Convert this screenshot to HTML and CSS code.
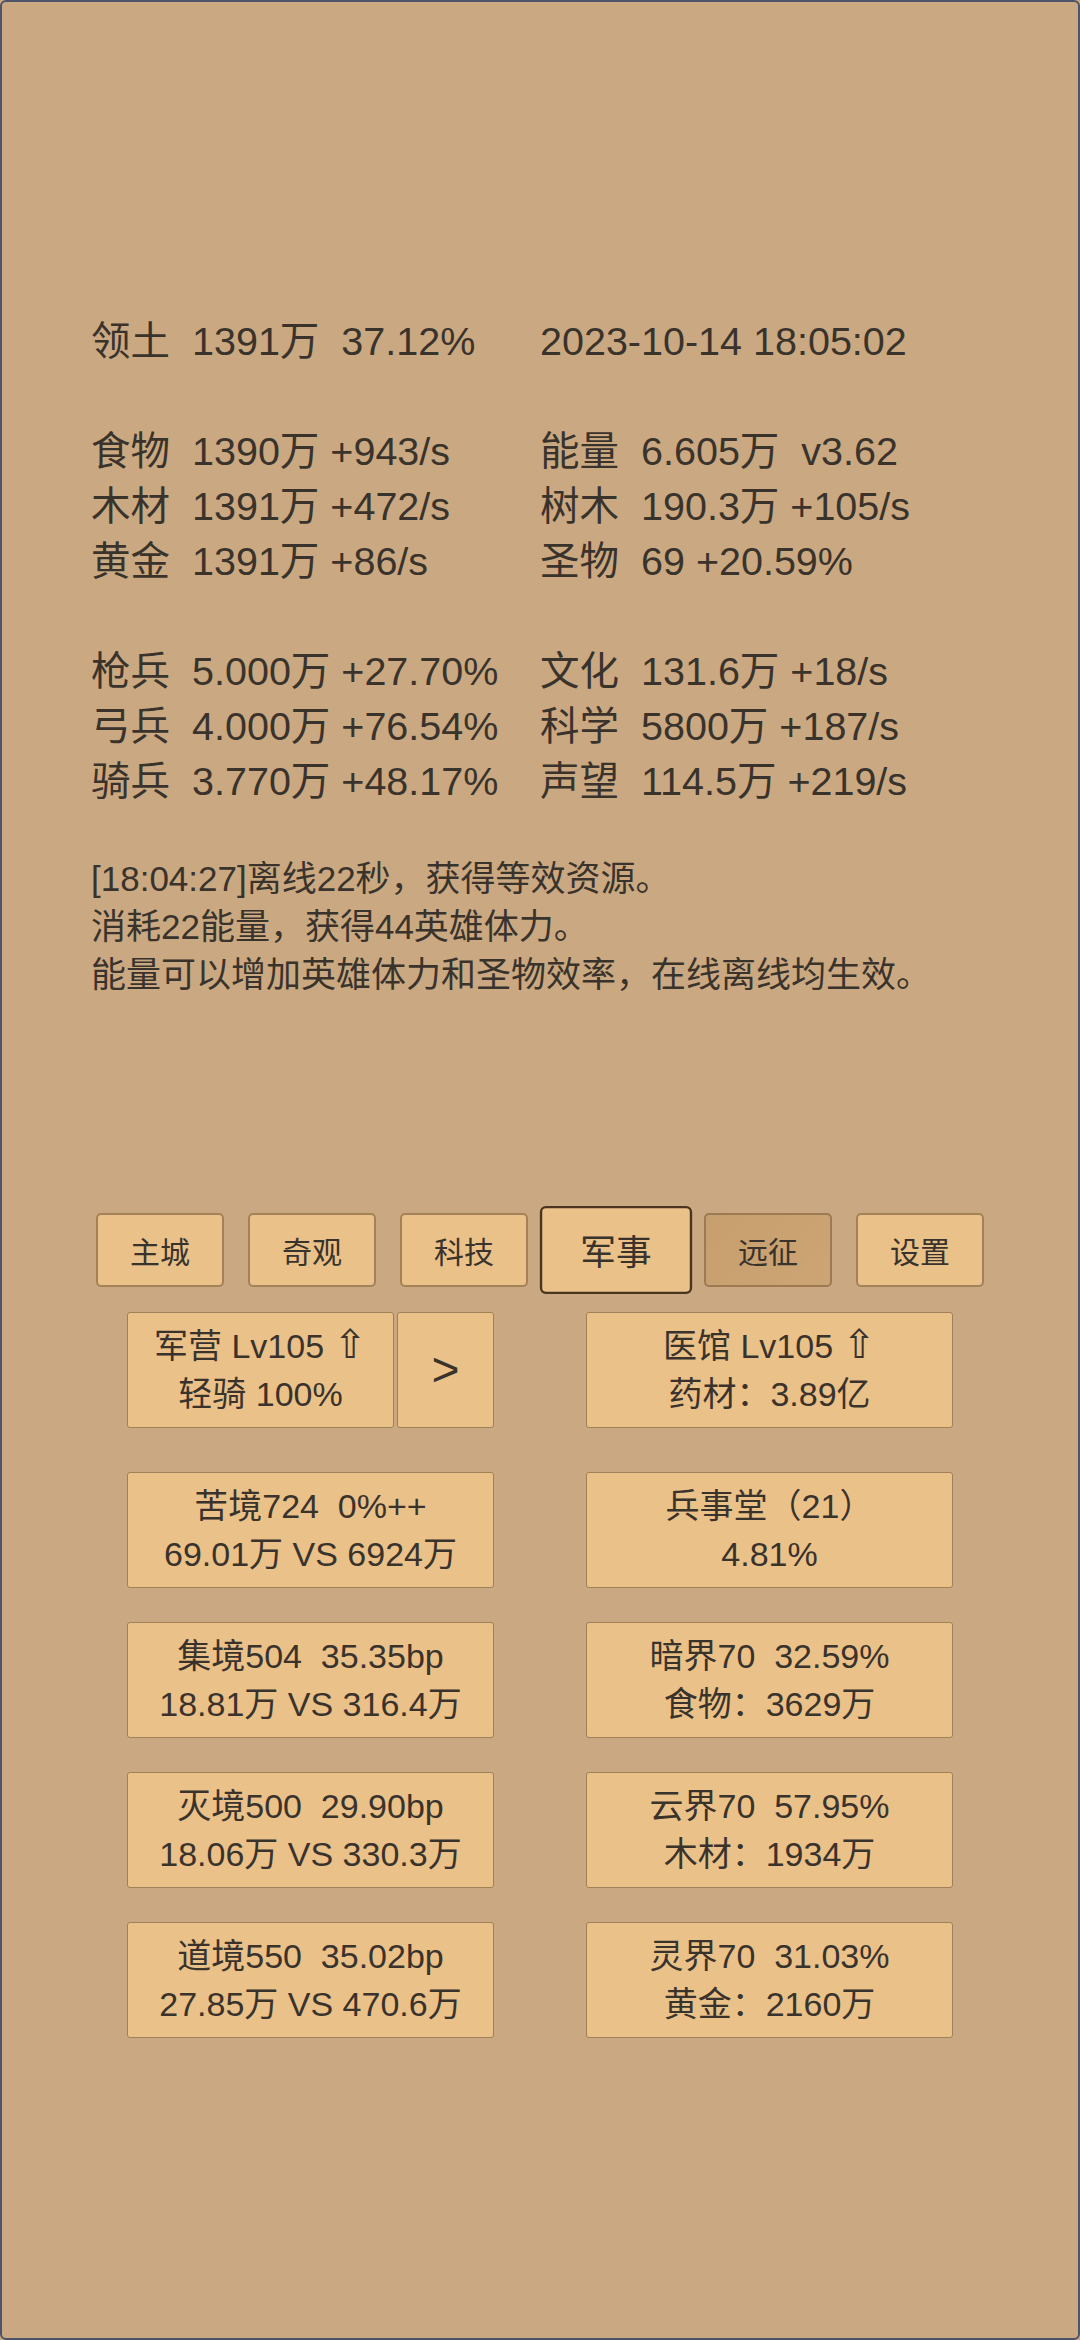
FILE: index.html
```html
<!DOCTYPE html>
<html lang="zh">
<head>
<meta charset="utf-8">
<title>Game</title>
<link rel="stylesheet" href="styles.css">
</head>
<body>
<div class="frame">
  <div class="stats">
    <div class="row"><div class="cell"><span class="lbl">领土</span>1391万  37.12%</div><div class="cell">2023-10-14 18:05:02</div></div>
    <div class="row blank"></div>
    <div class="row"><div class="cell"><span class="lbl">食物</span>1390万 +943/s</div><div class="cell"><span class="lbl">能量</span>6.605万  v3.62</div></div>
    <div class="row"><div class="cell"><span class="lbl">木材</span>1391万 +472/s</div><div class="cell"><span class="lbl">树木</span>190.3万 +105/s</div></div>
    <div class="row"><div class="cell"><span class="lbl">黄金</span>1391万 +86/s</div><div class="cell"><span class="lbl">圣物</span>69 +20.59%</div></div>
    <div class="row blank"></div>
    <div class="row"><div class="cell"><span class="lbl">枪兵</span>5.000万 +27.70%</div><div class="cell"><span class="lbl">文化</span>131.6万 +18/s</div></div>
    <div class="row"><div class="cell"><span class="lbl">弓兵</span>4.000万 +76.54%</div><div class="cell"><span class="lbl">科学</span>5800万 +187/s</div></div>
    <div class="row"><div class="cell"><span class="lbl">骑兵</span>3.770万 +48.17%</div><div class="cell"><span class="lbl">声望</span>114.5万 +219/s</div></div>
  </div>

  <div class="log">
    <div>[18:04:27]离线22秒，获得等效资源。</div>
    <div>消耗22能量，获得44英雄体力。</div>
    <div>能量可以增加英雄体力和圣物效率，在线离线均生效。</div>
  </div>

  <div class="tabs">
    <div class="tab">主城</div>
    <div class="tab">奇观</div>
    <div class="tab">科技</div>
    <div class="tab active">军事</div>
    <div class="tab dim">远征</div>
    <div class="tab">设置</div>
  </div>

  <div class="cards first">
    <div class="pair">
      <div class="card main">
        <div>军营 Lv105 <span class="arrow">⇧</span></div>
        <div>轻骑 100%</div>
      </div>
      <div class="card next">&gt;</div>
    </div>
    <div class="card">
      <div>医馆 Lv105 <span class="arrow">⇧</span></div>
      <div>药材：3.89亿</div>
    </div>
  </div>

  <div class="cards gap1">
    <div class="card"><div>苦境724  0%++</div><div>69.01万 VS 6924万</div></div>
    <div class="card"><div>兵事堂（21）</div><div>4.81%</div></div>
  </div>
  <div class="cards">
    <div class="card"><div>集境504  35.35bp</div><div>18.81万 VS 316.4万</div></div>
    <div class="card"><div>暗界70  32.59%</div><div>食物：3629万</div></div>
  </div>
  <div class="cards">
    <div class="card"><div>灭境500  29.90bp</div><div>18.06万 VS 330.3万</div></div>
    <div class="card"><div>云界70  57.95%</div><div>木材：1934万</div></div>
  </div>
  <div class="cards">
    <div class="card"><div>道境550  35.02bp</div><div>27.85万 VS 470.6万</div></div>
    <div class="card"><div>灵界70  31.03%</div><div>黄金：2160万</div></div>
  </div>
</div>
</body>
</html>
```

FILE: styles.css
```css
html, body {
  margin: 0;
  padding: 0;
}
body {
  width: 1080px;
  height: 2340px;
  background: #caa982;
  font-family: "Liberation Sans", "Noto Sans CJK SC", sans-serif;
  color: #3a332c;
}
.frame {
  box-sizing: border-box;
  width: 1080px;
  height: 2340px;
  border: 2px solid #4d5369;
  border-radius: 6px;
  padding-top: 312px;
  overflow: hidden;
}
.stats {
  padding-left: 89px;
  font-size: 39.5px;
  line-height: 55px;
}
.row {
  display: grid;
  grid-template-columns: 449px 1fr;
  height: 55px;
}
.cell {
  white-space: pre;
}
.lbl {
  display: inline-block;
  width: 101px;
}
.log {
  margin-top: 46px;
  padding-left: 89px;
  font-size: 35px;
  line-height: 48px;
}
.tabs {
  margin-top: 214px;
  display: flex;
  justify-content: center;
  gap: 24px;
}
.tab {
  box-sizing: border-box;
  width: 128px;
  height: 74px;
  display: flex;
  align-items: center;
  justify-content: center;
  background: #ebc18a;
  border: 2px solid #a58159;
  border-radius: 5px;
  font-size: 30px;
}
.tab.dim {
  background: linear-gradient(135deg, #c79f6e, #cda474);
  border-color: #9c7a55;
}
.tab.active {
  transform: scale(1.19);
  border-color: #4a3520;
}
.cards {
  display: flex;
  justify-content: center;
  gap: 92px;
  margin-top: 34px;
}
.cards.first {
  margin-top: 25px;
}
.cards.gap1 {
  margin-top: 44px;
}
.pair {
  display: flex;
  gap: 3px;
  width: 367px;
}
.card {
  box-sizing: border-box;
  width: 367px;
  height: 116px;
  background: #ebc18a;
  border: 1.5px solid #a08058;
  border-radius: 3px;
  display: flex;
  flex-direction: column;
  align-items: center;
  justify-content: center;
  font-size: 34px;
  line-height: 48px;
  white-space: pre;
}
.card.main {
  width: 267px;
}
.card.next {
  width: 97px;
  font-size: 48px;
}
.arrow {
  font-family: "DejaVu Sans", sans-serif;
  font-size: 40px;
  line-height: 40px;
}
```
